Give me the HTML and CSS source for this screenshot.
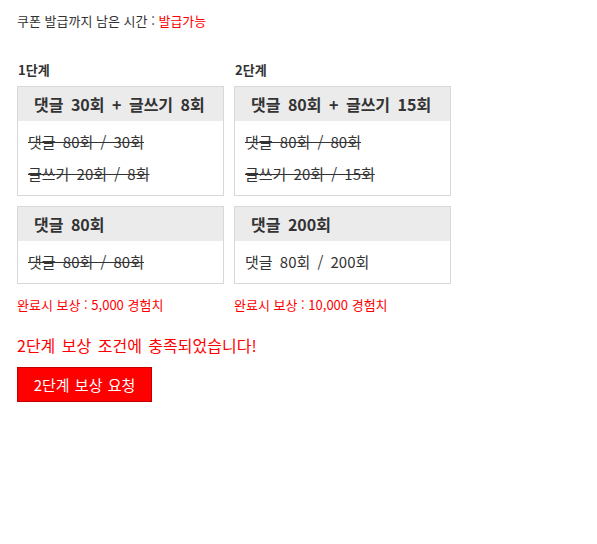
FILE: index.html
```html
<!DOCTYPE html>
<html lang="ko">
<head>
<meta charset="utf-8">
<link rel="stylesheet" href="styles.css">
</head>
<body>
<div class="wrap">
  <p class="timer">쿠폰 발급까지 남은 시간 : <span class="red">발급가능</span></p>
  <div class="stages">
    <div class="stage stage-1">
      <div class="label">1단계</div>
      <div class="box">
        <div class="box-head">댓글 30회 + 글쓰기 8회</div>
        <div class="box-body">
          <div class="line done">댓글 80회 / 30회</div>
          <div class="line done">글쓰기 20회 / 8회</div>
        </div>
      </div>
      <div class="box">
        <div class="box-head">댓글 80회</div>
        <div class="box-body">
          <div class="line done">댓글 80회 / 80회</div>
        </div>
      </div>
      <div class="reward">완료시 보상 : 5,000 경험치</div>
    </div>
    <div class="stage stage-2">
      <div class="label">2단계</div>
      <div class="box">
        <div class="box-head">댓글 80회 + 글쓰기 15회</div>
        <div class="box-body">
          <div class="line done">댓글 80회 / 80회</div>
          <div class="line done">글쓰기 20회 / 15회</div>
        </div>
      </div>
      <div class="box">
        <div class="box-head">댓글 200회</div>
        <div class="box-body">
          <div class="line">댓글 80회 / 200회</div>
        </div>
      </div>
      <div class="reward">완료시 보상 : 10,000 경험치</div>
    </div>
  </div>
  <p class="message">2단계 보상 조건에 충족되었습니다!</p>
  <button class="request" type="button">2단계 보상 요청</button>
</div>
</body>
</html>
```

FILE: styles.css
```css
html, body {
  margin: 0;
  padding: 0;
  background: #fff;
}
body {
  font-family: "Noto Sans CJK KR", "Noto Sans", sans-serif;
  color: #333;
}
.wrap {
  padding: 12px 17px;
}
.timer {
  margin: 0;
  font-size: 13px;
  line-height: 18px;
  color: #333;
}
.red {
  color: #ff0000;
}
.stages {
  display: flex;
  gap: 10px;
  margin-top: 31px;
  align-items: flex-start;
}
.stage-1 { width: 207px; }
.stage-2 { width: 217px; }
.label {
  font-size: 13px;
  font-weight: bold;
  line-height: 18px;
  margin-bottom: 7px;
  padding-left: 1px;
}
.box {
  border: 1px solid #d8d8d8;
  margin-bottom: 10px;
}
.box-head {
  background: #ebebeb;
  height: 34px;
  line-height: 34px;
  padding-left: 16px;
  font-size: 16px;
  font-weight: bold;
  word-spacing: 3px;
  color: #333;
  white-space: nowrap;
}
.box-body {
  padding: 5px 10px;
}
.line {
  font-size: 15px;
  line-height: 32px;
  word-spacing: 3px;
  color: #333;
  white-space: nowrap;
}
.done {
  text-decoration: line-through;
}
.reward {
  margin-top: 13px;
  font-size: 13px;
  line-height: 16px;
  color: #ff0000;
}
.message {
  margin: 22px 0 0;
  font-size: 16px;
  line-height: 20px;
  word-spacing: 2px;
  color: #ff0000;
}
.request {
  margin-top: 12px;
  display: block;
  width: 135px;
  height: 35px;
  padding: 0;
  background: #ff0000;
  border: 1px solid #c30000;
  color: #fff;
  font-family: "Noto Sans CJK KR", "Noto Sans", sans-serif;
  font-size: 15px;
  word-spacing: 1px;
}
```
